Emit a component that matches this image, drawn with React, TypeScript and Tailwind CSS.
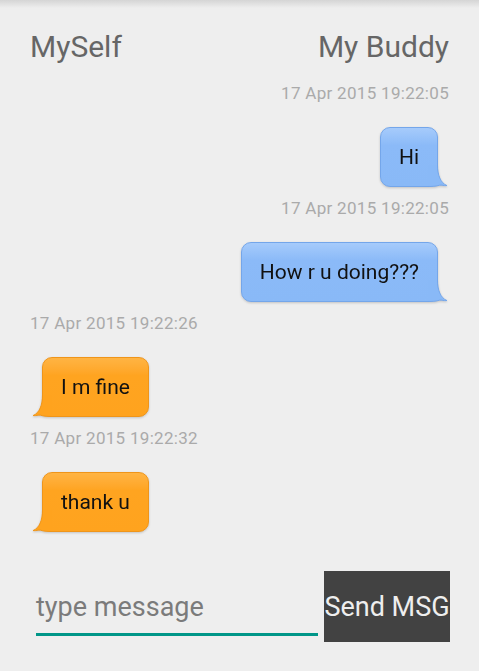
import React from "react";

type Msg = { ts: string; text: string; mine: boolean };

const msgs: Msg[] = [
  { ts: "17 Apr 2015 19:22:05", text: "Hi", mine: true },
  { ts: "17 Apr 2015 19:22:05", text: "How r u doing???", mine: true },
  { ts: "17 Apr 2015 19:22:26", text: "I m fine", mine: false },
  { ts: "17 Apr 2015 19:22:32", text: "thank u", mine: false },
];

function Tail({ mine }: { mine: boolean }) {
  const fill = mine ? "#89b9f7" : "#ffa31e";
  const stroke = mine ? "#74a6ea" : "#ef951a";
  return (
    <svg
      width="20"
      height="22"
      viewBox="0 0 20 22"
      className={
        mine
          ? "absolute right-[-10px] bottom-0"
          : "absolute left-[-10px] bottom-0 -scale-x-100"
      }
    >
      <path
        d="M0 0 L9.5 0 C9.5 10 12.5 18 19 20.6 C16 21 13.5 19.8 11.5 20.2 C8 21.4 4 21.5 0 21.5 Z"
        fill={fill}
      />
      <path
        d="M9.5 0 C9.5 10 12.5 18 19 20.6 C16 21 13.5 19.8 11.5 20.2 C8 21.4 4 21.5 0 21.5"
        fill="none"
        stroke={stroke}
        strokeWidth="1"
      />
    </svg>
  );
}

function Bubble({ m }: { m: Msg }) {
  return (
    <div className="relative drop-shadow-[0_1px_1px_rgba(0,0,0,0.18)]">
      <div
        className={
          m.mine
            ? "rounded-[10px] border border-[#74a6ea] bg-gradient-to-b from-[#a6cbfb] via-[#8bbaf8] via-30% to-[#89b9f7] px-[18px] py-[17px] text-[21px] leading-[24px] text-[#111]"
            : "rounded-[10px] border border-[#ef951a] bg-gradient-to-b from-[#ffb443] via-[#ffa420] via-30% to-[#ffa31e] px-[18px] py-[17px] text-[21px] leading-[24px] text-[#111]"
        }
      >
        <span className="relative z-10">{m.text}</span>
      </div>
      <Tail mine={m.mine} />
    </div>
  );
}

export default function App() {
  return (
    <div
      className="relative flex h-[671px] w-[479px] flex-col overflow-hidden bg-[#eeeeee]"
      style={{ fontFamily: "Roboto, 'Noto Sans', sans-serif" }}
    >
      <div className="h-[8px] bg-gradient-to-b from-[#d5d5d5] to-[#eeeeee]" />
      <div className="mt-[24px] flex justify-between px-[30px] text-[30px] leading-none text-[#666666]">
        <span>MySelf</span>
        <span>My Buddy</span>
      </div>
      <div className="mt-[21px] flex flex-col px-[30px]">
        {msgs.map((m, i) => (
          <div key={i} className={i > 0 ? "mt-[11px] flex flex-col" : "flex flex-col"}>
            <div
              className={
                m.mine
                  ? "text-right text-[17px] leading-5 tracking-[0.3px] text-[#aaaaaa]"
                  : "text-left text-[17px] leading-5 tracking-[0.3px] text-[#aaaaaa]"
              }
            >
              {m.ts}
            </div>
            <div
              className={
                m.mine
                  ? "mt-[24px] flex justify-end pr-[11px]"
                  : "mt-[24px] flex justify-start pl-[12px]"
              }
            >
              <Bubble m={m} />
            </div>
          </div>
        ))}
      </div>
      <div className="mt-[39px] flex h-[71px] gap-[6px] pl-[36px] pr-[29px]">
        <div className="flex flex-1 flex-col justify-end pb-[6px]">
          <div className="text-[27px] leading-none text-[#7b7b7b]">type message</div>
          <div className="mt-[12px] h-[3px] bg-[#009688]" />
        </div>
        <div className="flex w-[126px] items-center justify-center bg-[#424242] pt-[2px] text-[27px] leading-none whitespace-nowrap text-[#eeeeee]">
          Send MSG
        </div>
      </div>
    </div>
  );
}
